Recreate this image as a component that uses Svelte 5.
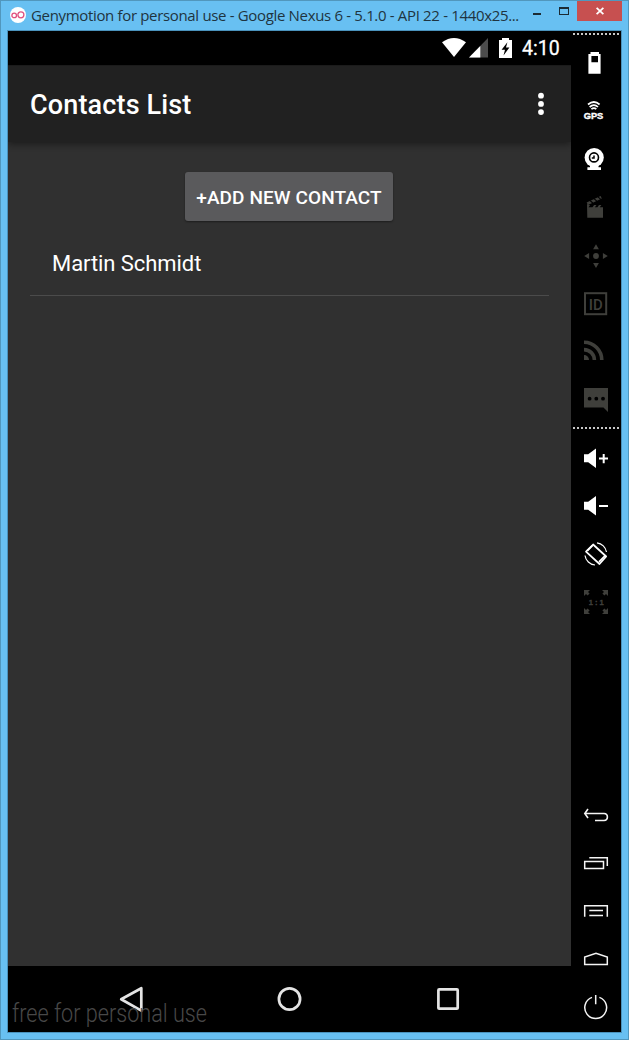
<script>
  const grey = '#3f3f3b';
</script>

<div class="window">
  <header class="titlebar">
    <svg class="logo" width="16" height="16" viewBox="0 0 16 16">
      <circle cx="8" cy="8" r="8" fill="#fff" />
      <g fill="none" stroke="#e0517f" stroke-width="1.3"><circle cx="4.2" cy="8.4" r="2.3" /><circle cx="10.9" cy="7.8" r="3" /></g>
    </svg>
    <span class="caption">Genymotion for personal use - Google Nexus 6 - 5.1.0 - API 22 - 1440x25...</span>
    <div class="controls">
      <i class="min"></i>
      <i class="max"></i>
      <div class="close">
        <svg width="8" height="8" viewBox="0 0 8 8"><path d="M.6 .8L7.4 7.2M7.4 .8L.6 7.2" stroke="#fff" stroke-width="1.8" /></svg>
      </div>
    </div>
  </header>

  <div class="body">
    <main class="phone">
      <div class="status">
        <svg width="71" height="20" viewBox="0 0 71 20">
          <path d="M0 4.3Q12 -4.2 24 4.3L12 19Z" fill="#fff" />
          <path d="M46 0V19.5H27Z" fill="#4c4c4c" />
          <path d="M38.3 8V19.5H27Z" fill="#fff" />
          <path d="M57 2h3V0h7v2h3v18H57Z" fill="#fff" />
          <path d="M65.4 4.3L59.6 11.7H63L61.5 17.5L67.4 9.5H64Z" fill="#000" />
        </svg>
        <span class="clock">4:10</span>
      </div>
      <div class="appbar">
        <h1>Contacts List</h1>
        <svg width="8" height="24" viewBox="0 0 8 24" fill="#fff"><circle cx="4" cy="3.7" r="2.9" /><circle cx="4" cy="11.9" r="2.9" /><circle cx="4" cy="20.1" r="2.9" /></svg>
      </div>
      <div class="content">
        <button><span>+ADD NEW CONTACT</span></button>
        <ul><li><span>Martin Schmidt</span></li></ul>
      </div>
      <div class="nav">
        <svg width="563" height="66" viewBox="0 0 563 66" fill="none" stroke="#e4e4e4" stroke-width="2.7" stroke-linejoin="round">
          <path d="M113.2 33.3L133.3 22.2V44.6Z" />
          <circle cx="281.5" cy="33" r="10.6" />
          <rect x="430.4" y="23.4" width="19.3" height="19.3" rx=".8" />
        </svg>
        <span class="watermark">free for personal use</span>
      </div>
    </main>

    <aside>
      <div class="dots"></div>
      <svg viewBox="0 0 48 48"><path fill="#fff" fill-rule="evenodd" d="M18.5 14H27v2h1.6v19.7H16.4V16h2.1ZM19.4 18v6.3h6.6V18Z" /></svg>
      <svg viewBox="0 0 48 48">
        <g fill="none" stroke="#fff" stroke-width="1.7"><path d="M16 18.5Q22 13.5 27.6 18.5M17.6 21Q22 17.2 26 21M19.4 23.2Q22 21 24.3 23.2" /></g>
        <text x="11.7" y="33.2" textLength="19.6" lengthAdjust="spacingAndGlyphs" font-size="8.6" font-weight="700" fill="#fff" stroke="#fff" stroke-width=".35">GPS</text>
      </svg>
      <svg viewBox="0 0 48 48">
        <circle cx="22.2" cy="23.5" r="9.6" fill="#fff" /><path d="M18 31h8.5v2.2H29V36H15.4v-2.8H18Z" fill="#fff" />
        <circle cx="22" cy="23.4" r="4.5" fill="none" stroke="#000" stroke-width="1.6" /><path d="M22 21.5V24h-2.2" fill="none" stroke="#000" stroke-width="1.5" />
      </svg>
      <svg viewBox="0 0 48 48" fill={grey}>
        <path d="M14.6 20.4L28.6 14L29.8 16.6L16 23Z" />
        <path d="M18 18.5l2.8 2.5M22 16.7l2.8 2.5M26 14.9l2.8 2.5" stroke="#000" stroke-width="1.1" />
        <path d="M15 22l3 1.2l-1.5 2h4l1.6-2.2h2.4l-1.6 2.2h2.5l1.6-2.2h2.4l-1.6 2.2H31V35.7H15.3Z" />
      </svg>
      <svg viewBox="0 0 48 48" fill={grey}><circle cx="24" cy="26" r="2.9" /><path d="M24 14.3l2.9 4.9h-5.8ZM24 37.9l2.9-4.9h-5.8ZM12.2 26l4.9-2.9v5.8ZM35.8 26l-4.9-2.9v5.8Z" /></svg>
      <svg viewBox="0 0 48 48">
        <rect x="13" y="15.2" width="21.2" height="21" fill="none" stroke={grey} stroke-width="2" />
        <text x="16.7" y="31.6" textLength="14" lengthAdjust="spacingAndGlyphs" font-size="15.2" font-weight="500" fill={grey} class="roboto">ID</text>
      </svg>
      <svg viewBox="0 0 48 48">
        <path d="M12 16.2A17.8 17.8 0 0 1 29.8 34M12 23.6A10.4 10.4 0 0 1 22.4 34" fill="none" stroke={grey} stroke-width="3.6" /><path d="M12 29A5 5 0 0 1 17 34H12Z" fill={grey} />
      </svg>
      <svg viewBox="0 0 48 48"><path d="M12 14H36V38L31.5 33.4H12Z" fill={grey} /><g fill="#000"><circle cx="17.6" cy="24.7" r="1.9" /><circle cx="24.3" cy="24.7" r="1.9" /><circle cx="31" cy="24.7" r="1.9" /></g></svg>
      <div class="dots second"></div>
      <svg viewBox="0 0 48 48" fill="#fff"><path d="M12 20.3h4.2L24 14.6V34l-7.8-5.8H12ZM27 23.6h3.7V20h2v3.6H36v2h-3.3v3.7h-2v-3.7H27Z" /></svg>
      <svg viewBox="0 0 48 48" fill="#fff"><path d="M12 19.8h4.2L24 14V33.4l-7.8-5.7H12ZM27 23h9v2h-9Z" /></svg>
      <svg viewBox="0 0 48 48" fill="none" stroke="#fff" stroke-linejoin="round">
        <path d="M14 21.6L21.1 14.5L34.2 26.5L27.5 34Z" stroke-width="1.7" /><path d="M15.4 20.6l5-5M27 31.8l6-6" stroke-width="1.8" />
        <path d="M25 12.8A11 11 0 0 1 34.5 22M13 25.5A11 11 0 0 0 23 35" stroke-width="1.2" />
      </svg>
      <svg viewBox="0 0 48 48" fill={grey}>
        <path d="M12 12h6l-2 2 1.6 1.6-2 2L14 16l-2 2ZM36 12h-6l2 2-1.6 1.6 2 2L34 16l2 2ZM12 36h6l-2-2 1.6-1.6-2-2L14 32l-2-2ZM36 36h-6l2-2-1.6-1.6 2-2L34 32l2-2Z" />
        <text x="16.7" y="27" textLength="15" font-size="7.5" font-weight="700" stroke={grey} stroke-width=".3">1:1</text>
      </svg>
      <div class="spacer"></div>
      <svg viewBox="0 0 48 48" fill="none" stroke="#f4f4f4" stroke-width="1.6"><path d="M13 22.5H32Q35.4 22.7 35.4 26T32 29.5H23M16 18L12.8 22.5L16 27" /></svg>
      <svg viewBox="0 0 48 48" fill="none" stroke="#f4f4f4" stroke-width="1.5"><path d="M12.7 22.5H31.5V29.5H12.7ZM17.3 18.7H35.3V27" /></svg>
      <svg viewBox="0 0 48 48" fill="none" stroke="#f4f4f4" stroke-width="1.5"><path d="M12.7 29.8V18.7H35.3V29.8M17.3 23.6H31M17.3 28.5H31" /></svg>
      <svg viewBox="0 0 48 48" fill="none" stroke="#f4f4f4" stroke-width="1.5"><path d="M12.7 29.5V22L24 18.2L35.3 22V29.5Z" /></svg>
      <svg viewBox="0 0 48 48" fill="none" stroke="#f4f4f4" stroke-width="1.5"><path d="M20 14.4A10.9 10.9 0 1 0 27.4 14.4M23.7 12V21.3" /></svg>
    </aside>
  </div>
</div>

<style>
  .window { box-sizing: border-box; width: 629px; height: 1040px; background: #68c0f2; border: 1px solid #5197bd; padding: 0 6px 6px; display: flex; flex-direction: column; overflow: hidden; }
  .titlebar { height: 29px; display: flex; align-items: flex-start; flex: none; }
  .logo { margin: 6px 5px 0 3px; flex: none; }
  .caption { font: 15px/20px "Open Sans", sans-serif; color: #1f3440; margin-top: 4px; width: 498px; white-space: nowrap; letter-spacing: -0.335px; flex: none; }
  .controls { display: flex; align-items: flex-start; margin-left: 4px; }
  .min { width: 8px; height: 2px; background: #1c2b34; margin-top: 12px; }
  .max { box-sizing: border-box; width: 10px; height: 8px; border: 1px solid #1c2b34; border-top-width: 2px; margin: 6px 8px 0 18px; }
  .close { width: 45px; height: 20px; background: #c75050; display: flex; align-items: center; justify-content: center; }
  .body { box-sizing: border-box; width: 615px; height: 1003px; border: 1px solid #4a92bc; display: flex; background: #000; }
  .phone { width: 563px; display: flex; flex-direction: column; background: #303030; font-family: Roboto, sans-serif; color: #fff; }
  .status { height: 34px; background: #000; display: flex; align-items: flex-start; padding-left: 434px; flex: none; }
  .status svg { margin-top: 7px; }
  .clock { font-size: 19.5px; font-weight: 400; -webkit-text-stroke: .3px #fff; line-height: 22px; margin: 7px 0 0 9px; }
  .appbar { box-sizing: border-box; height: 77px; background: #212121; border-top: 1px solid #1b1b1b; display: flex; align-items: center; justify-content: space-between; padding: 0 26px 0 22px; box-shadow: 0 2px 7px rgba(0, 0, 0, .45); flex: none; clip-path: inset(0 0 -12px 0); }
  h1 { font-size: 27px; font-weight: 500; letter-spacing: .15px; margin: 2px 0 0; line-height: 32px; white-space: nowrap; }
  .content { flex: 1; display: flex; flex-direction: column; align-items: center; padding: 30px 22px 0; }
  button { width: 208px; height: 49px; border: 0; border-radius: 3px; background: #5a5a5c; color: #fff; font: 500 19px/49px Roboto, sans-serif; letter-spacing: .1px; white-space: nowrap; box-shadow: 0 1px 2px rgba(0, 0, 0, .4); flex: none; display: flex; justify-content: center; padding: 1px 0 0; margin: 0 1px 0 0; }
  ul { list-style: none; margin: 10px 0 0; padding: 0; width: 519px; }
  li { height: 64px; border-bottom: 1px solid #4b4b4b; padding-left: 22px; font-size: 22px; letter-spacing: -.07px; line-height: 65px; }
  .nav { position: relative; height: 66px; background: #000; flex: none; }
  .nav svg { display: block; }
  .watermark { position: absolute; left: 4px; bottom: 2px; font-size: 25px; line-height: 32px; font-weight: 300; color: #484848; white-space: nowrap; transform: scaleX(.865); transform-origin: left; }
  aside { width: 50px; background: #000; display: flex; flex-direction: column; padding: 2px 0 1px; box-sizing: border-box; font-family: "Liberation Sans", sans-serif; }
  aside svg { width: 48px; height: 48px; margin-left: 1px; flex: none; display: block; }
  .roboto { font-family: Roboto, sans-serif; }
  .dots { height: 2px; width: 46px; margin: 0 0 3px 2px; background: repeating-linear-gradient(90deg, #c8c8c8 0 2px, transparent 2px 4px); flex: none; }
  .second { margin: 5px 0 5px 2px; }
  .spacer { flex: 1; }
</style>
